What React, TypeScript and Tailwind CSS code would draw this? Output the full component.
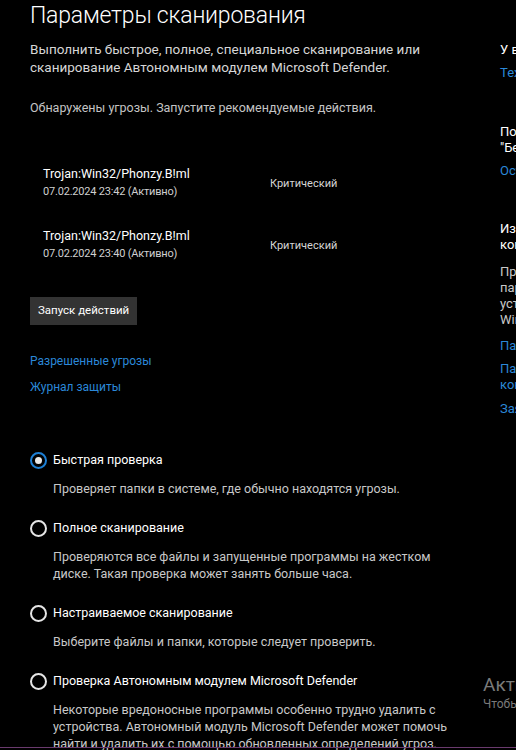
function Radio({ checked }: { checked?: boolean }) {
  if (checked) {
    return (
      <span className="w-[17px] h-[17px] shrink-0 rounded-full border-2 border-[#1d7fd4] flex items-center justify-center">
        <span className="w-[7px] h-[7px] rounded-full bg-[#e8e8e8]" />
      </span>
    );
  }
  return <span className="w-[17px] h-[17px] shrink-0 rounded-full border-2 border-[#e6e6e6]" />;
}

function Threat({ date }: { date: string }) {
  return (
    <div className="flex items-center pl-[13px]">
      <div className="w-[227px] shrink-0">
        <div className="text-[12.5px] leading-[18px] text-white">Trojan:Win32/Phonzy.B!ml</div>
        <div className="mt-[1px] text-[11px] leading-[16px] tracking-[-0.2px] text-[#cfcfcf]">{date} (Активно)</div>
      </div>
      <div className="pt-[3px] text-[11px] leading-[16px] text-[#d4d4d4]">Критический</div>
    </div>
  );
}

const scans = [
  { label: 'Быстрая проверка', checked: true, desc: ['Проверяет папки в системе, где обычно находятся угрозы.'] },
  {
    label: 'Полное сканирование',
    desc: ['Проверяются все файлы и запущенные программы на жестком', 'диске. Такая проверка может занять больше часа.'],
  },
  { label: 'Настраиваемое сканирование', desc: ['Выберите файлы и папки, которые следует проверить.'] },
  {
    label: 'Проверка Автономным модулем Microsoft Defender',
    desc: [
      'Некоторые вредоносные программы особенно трудно удалить с',
      'устройства. Автономный модуль Microsoft Defender может помочь',
      'найти и удалить их с помощью обновленных определений угроз.',
    ],
  },
];

export default function App() {
  return (
    <div className="w-[516px] h-[750px] overflow-hidden bg-black relative font-['Segoe_UI',Roboto,sans-serif]">
      <div className="flex">
        <main className="w-[470px] shrink-0 pl-[30px]">
          <h1 className="text-[23px] leading-[32px] font-light tracking-[-0.2px] text-white">Параметры сканирования</h1>
          <p className="mt-[8px] text-[13.5px] leading-[18px] text-[#d6d6d6]">
            Выполнить быстрое, полное, специальное сканирование или
            <br />
            сканирование Автономным модулем Microsoft Defender.
          </p>
          <p className="mt-[23px] text-[12.5px] leading-[18px] text-[#c4c4c4]">
            Обнаружены угрозы. Запустите рекомендуемые действия.
          </p>

          <div className="mt-[48px] flex flex-col gap-[27px]">
            <Threat date="07.02.2024 23:42" />
            <Threat date="07.02.2024 23:40" />
          </div>

          <button className="mt-[35px] h-[28px] px-[8px] bg-[#333333] text-[11.5px] text-white">Запуск действий</button>

          <div className="mt-[27px] text-[12px] leading-[18px] text-[#2b88d8]">Разрешенные угрозы</div>
          <div className="mt-[8px] text-[12px] leading-[18px] text-[#2b88d8]">Журнал защиты</div>

          <div className="mt-[54px] flex flex-col gap-[21px]">
            {scans.map((s) => (
              <div key={s.label}>
                <div className="flex items-center gap-[6px] h-[20px]">
                  <Radio checked={s.checked} />
                  <span className="text-[12.5px] text-white">{s.label}</span>
                </div>
                <p className="mt-[10px] pl-[23px] text-[12.5px] leading-[17px] text-[#c8c8c8]">
                  {s.desc.map((line, i) => (
                    <span key={i} className="block whitespace-nowrap">
                      {line}
                    </span>
                  ))}
                </p>
              </div>
            ))}
          </div>
        </main>

        <aside className="ml-[30px] w-[220px] shrink-0 text-[13px] leading-[16px] whitespace-nowrap">
          <div className="mt-[42px] text-white">У вас есть вопросы?</div>
          <div className="mt-[7px] text-[#2b88d8]">Техническая поддержка</div>

          <div className="mt-[43px] text-white">
            Помогите улучшить
            <br />
            "Безопасность Windows"
          </div>
          <div className="mt-[7px] text-[#2b88d8]">Оставить отзыв</div>

          <div className="mt-[42px] text-white">
            Изменить параметры
            <br />
            конфиденциальности
          </div>
          <div className="mt-[11px] text-[#c8c8c8]">
            Просмотр и изменение
            <br />
            параметров конфиденциальности
            <br />
            устройства с ОС
            <br />
            Windows 10.
          </div>
          <div className="mt-[10px] text-[#2b88d8]">Параметры конфиденциальности</div>
          <div className="mt-[7px] text-[#2b88d8]">
            Панель мониторинга
            <br />
            конфиденциальности
          </div>
          <div className="mt-[8px] text-[#2b88d8]">Заявление о конфиденциальности</div>
        </aside>
      </div>

      <div className="absolute left-[483px] top-[673px] text-[#7a7a7a] whitespace-nowrap">
        <div className="text-[19px] leading-[24px]">Активация Windows</div>
        <div className="text-[12px] leading-[15px]">Чтобы активировать Windows, перейдите в раздел "Параметры".</div>
      </div>

      <div className="absolute left-0 right-0 bottom-[2px] h-[1px] bg-[#6a3a6e]" />
    </div>
  );
}
